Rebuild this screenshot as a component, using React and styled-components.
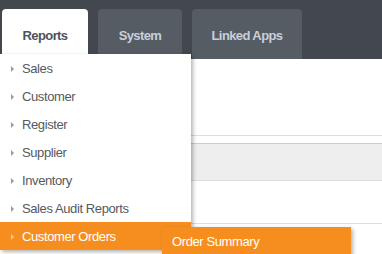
import React from 'react';
import styled, { createGlobalStyle } from 'styled-components';

const GlobalStyle = createGlobalStyle`
  body {
    margin: 0;
    background: #ffffff;
    font-family: "Liberation Sans", Arial, sans-serif;
    overflow: hidden;
  }
`;

const Page = styled.div`
  position: relative;
  width: 382px;
  height: 254px;
  overflow: hidden;
`;

const TopBar = styled.div`
  display: flex;
  align-items: flex-end;
  gap: 10px;
  height: 59px;
  padding: 9px 0 0 2px;
  box-sizing: border-box;
  background: #43474e;
`;

const Tab = styled.div`
  display: flex;
  align-items: center;
  justify-content: center;
  width: ${(props) => props.$width}px;
  height: 50px;
  padding-top: 3px;
  box-sizing: border-box;
  border-radius: 4px 4px 0 0;
  font-size: 13px;
  letter-spacing: -0.6px;
  font-weight: bold;
  background: ${(props) => (props.$active ? '#ffffff' : '#565c64')};
  color: ${(props) => (props.$active ? '#4b5261' : '#c8cfdb')};
`;

const Content = styled.div`
  padding-top: 76px;
`;

const Rule = styled.div`
  height: 7px;
  border-top: 1px solid #dddddd;
`;

const Band = styled.div`
  height: 36px;
  background: #eeeeee;
  border-top: 1px solid #cccccc;
  border-bottom: 1px solid #dddddd;
`;

const Gap = styled.div`
  height: 42px;
  border-bottom: 1px solid #dddddd;
`;

const Menu = styled.ul`
  position: absolute;
  left: 0;
  top: 54px;
  width: 191px;
  margin: 0;
  padding: 0;
  list-style: none;
  background: #ffffff;
  box-shadow: 2px 2px 4px rgba(0, 0, 0, 0.3);
`;

const Item = styled.li`
  position: relative;
  display: flex;
  align-items: center;
  height: 28px;
  padding-left: 22px;
  font-size: 13px;
  letter-spacing: -0.4px;
  color: ${(props) => (props.$active ? '#ffffff' : '#555a60')};
  background: ${(props) => (props.$active ? '#f68e1f' : 'transparent')};

  &::before {
    content: '';
    position: absolute;
    left: 11px;
    top: 12px;
    border-style: solid;
    border-width: 3px 0 3px 3px;
    border-color: transparent transparent transparent
      ${(props) => (props.$active ? '#fbc68c' : '#9a9a9a')};
  }
`;

const SubMenu = styled.div`
  position: absolute;
  left: 162px;
  top: 5px;
  width: 189px;
  height: 28px;
  display: flex;
  align-items: center;
  padding-left: 10px;
  box-sizing: border-box;
  background: #f68e1f;
  color: #ffffff;
  font-size: 13px;
  letter-spacing: -0.4px;
  box-shadow: 2px 2px 4px rgba(0, 0, 0, 0.3);
`;

const items = [
  'Sales',
  'Customer',
  'Register',
  'Supplier',
  'Inventory',
  'Sales Audit Reports',
];

const App = () => {
  return (
    <Page>
      <GlobalStyle />
      <TopBar>
        <Tab $active $width={86}>Reports</Tab>
        <Tab $width={84}>System</Tab>
        <Tab $width={110}>Linked Apps</Tab>
      </TopBar>
      <Content>
        <Rule />
        <Band />
        <Gap />
      </Content>
      <Menu>
        {items.map((label) => (
          <Item key={label}>{label}</Item>
        ))}
        <Item $active>
          Customer Orders
          <SubMenu>Order Summary</SubMenu>
        </Item>
      </Menu>
    </Page>
  );
};

export default App;
